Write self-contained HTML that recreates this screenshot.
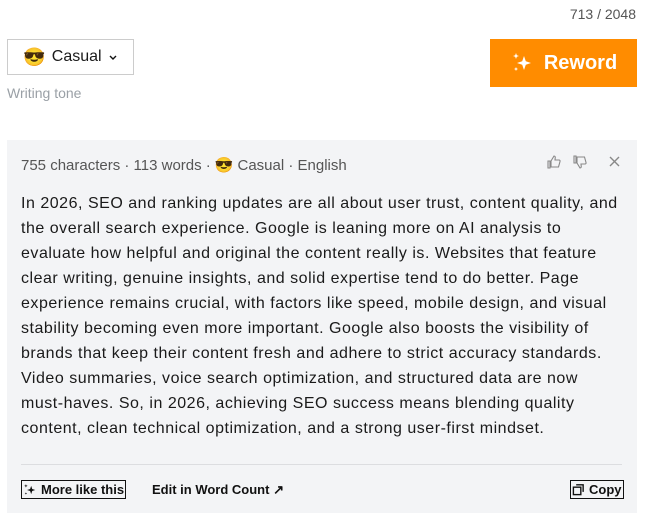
<!DOCTYPE html>
<html><head><meta charset="utf-8"><style>
*{margin:0;padding:0;box-sizing:border-box}
body{width:662px;height:520px;background:#fff;font-family:"Liberation Sans",sans-serif;color:#1a1a1a;position:relative;overflow:hidden}
.abs{position:absolute}
.count{right:26px;top:6px;font-size:14px;color:#555}
.tone{left:7px;top:39px;width:127px;height:36px;border:1px solid #ccc;display:flex;align-items:center;justify-content:center;font-size:16px;gap:6px}
.tl{left:7px;top:85px;font-size:14px;color:#9aa0a6}
.rew{left:490px;top:39px;width:147px;height:48px;background:#ff8c00;color:#fff;font-size:20px;font-weight:bold;display:flex;align-items:center;justify-content:center;gap:10px}
.panel{left:7px;top:140px;width:630px;height:373px;background:#f3f4f6}
.meta{left:21px;top:156px;font-size:15px;color:#555;display:flex;align-items:center;gap:4px}
.txt{left:21px;top:191px;font-size:16px;line-height:25px;color:#1a1a1a;white-space:nowrap;letter-spacing:0.52px}
.hr{left:21px;top:464px;width:601px;height:1px;background:#dcdde0}
.bt{font-size:13px;font-weight:bold;color:#111;display:flex;align-items:center;gap:4px}
</style></head><body>
<div class="abs count">713 / 2048</div>
<div class="abs tone"><span style="font-size:18px">😎</span><span>Casual</span><svg width="10" height="10" viewBox="0 0 10 10"><path d="M2 4l3 3 3-3" stroke="#111" stroke-width="1.4" fill="none"/></svg></div>
<div class="abs tl">Writing tone</div>
<div class="abs rew"><svg width="24" height="24" viewBox="0 0 24 24" fill="#fff"><path d="M14 5l1.8 5.2L21 12l-5.2 1.8L14 19l-1.8-5.2L7 12l5.2-1.8z"/><path d="M6 2l.8 2.2L9 5l-2.2.8L6 8l-.8-2.2L3 5l2.2-.8z"/><path d="M6 16l.6 1.4L8 18l-1.4.6L6 20l-.6-1.4L4 18l1.4-.6z"/></svg>Reword</div>
<div class="abs panel"></div>
<div class="abs meta">755 characters · 113 words · <span style="font-size:15px">😎</span> Casual · English</div>
<svg class="abs" style="left:546px;top:154px" width="80" height="16" viewBox="0 0 80 16"><path d="M2 7h2v7H2zM5 7l3-5c1 0 1.5 1 1.2 2L9 6h4c.8 0 1.3.8 1 1.5l-1.5 5.5H5z" stroke="#888" stroke-width="1.1" fill="none"/><path d="M28 2h2v7h-2zM31 9l3 5c1 0 1.5-1 1.2-2L35 10h4c.8 0 1.3-.8 1-1.5L38.5 3H31z" stroke="#888" stroke-width="1.1" fill="none"/><path d="M64 3l9 9M73 3l-9 9" stroke="#888" stroke-width="1.4"/></svg>
<div class="abs txt">In 2026, SEO and ranking updates are all about user trust, content quality, and<br>the overall search experience. Google is leaning more on AI analysis to<br>evaluate how helpful and original the content really is. Websites that feature<br>clear writing, genuine insights, and solid expertise tend to do better. Page<br>experience remains crucial, with factors like speed, mobile design, and visual<br>stability becoming even more important. Google also boosts the visibility of<br>brands that keep their content fresh and adhere to strict accuracy standards.<br>Video summaries, voice search optimization, and structured data are now<br>must-haves. So, in 2026, achieving SEO success means blending quality<br>content, clean technical optimization, and a strong user-first mindset.</div>
<div class="abs hr"></div>
<div class="abs bt" style="left:21px;top:480px;height:19px;border:1px solid #111;padding:0 1px;"><svg width="14" height="14" viewBox="0 0 24 24" fill="#111"><path d="M14 5l1.8 5.2L21 12l-5.2 1.8L14 19l-1.8-5.2L7 12l5.2-1.8z"/><path d="M5 2l.7 2L8 5l-2.3.7L5 8l-.7-2.3L2 5l2.3-1z"/><path d="M5 16l.6 1.4L7 18l-1.4.6L5 20l-.6-1.4L3 18l1.4-.6z"/></svg>More like this</div>
<div class="abs bt" style="left:152px;top:482px">Edit in Word Count ↗</div>
<div class="abs bt" style="left:570px;top:480px;height:19px;border:1px solid #111;padding:0 1px;"><svg width="13" height="13" viewBox="0 0 14 14"><rect x="1.5" y="4.5" width="8" height="8" stroke="#111" stroke-width="1.5" fill="none"/><path d="M4.5 2h7.5v7.5" stroke="#111" stroke-width="1.5" fill="none"/></svg>Copy</div>
</body></html>
